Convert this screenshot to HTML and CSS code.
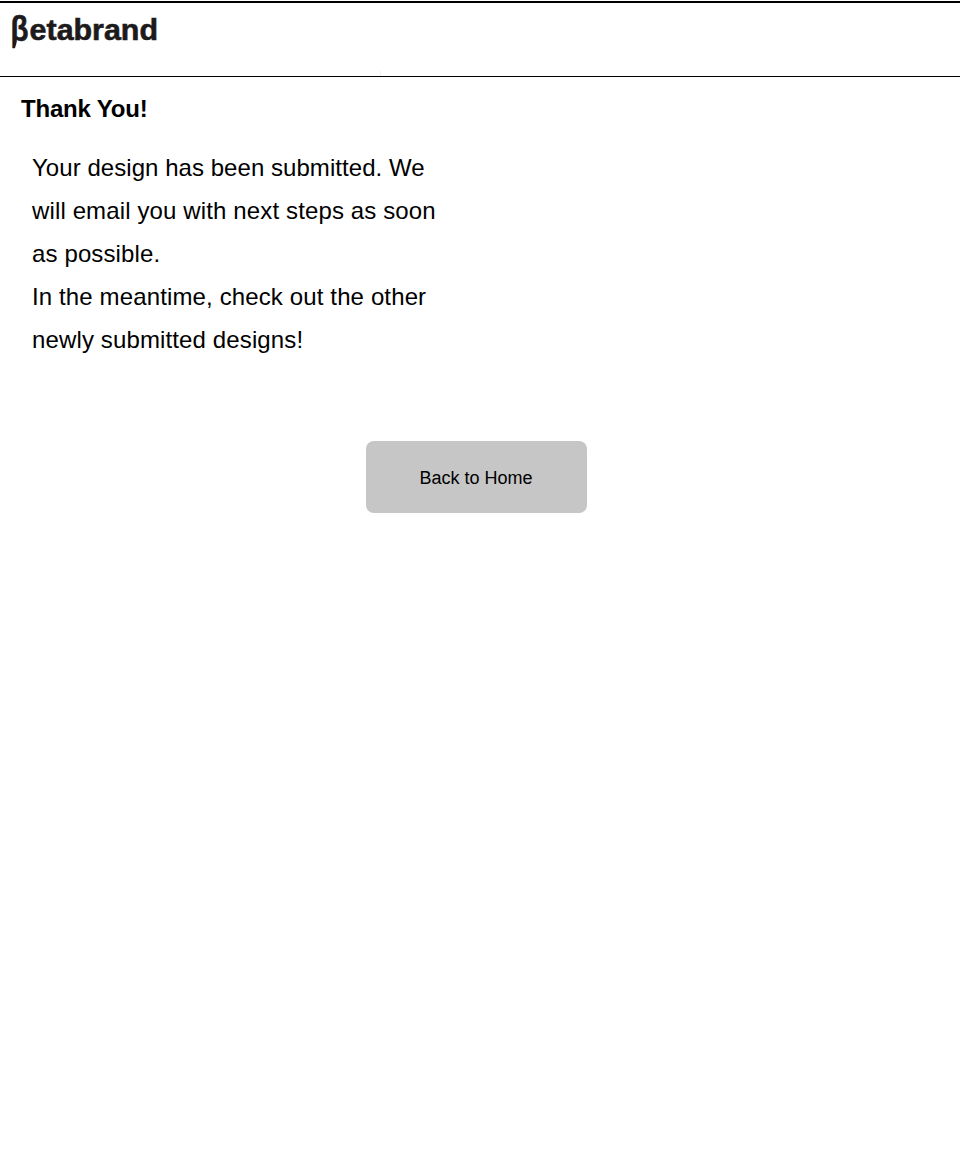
FILE: index.html
```html
<!DOCTYPE html>
<html lang="en">
<head>
<meta charset="utf-8">
<title>Betabrand</title>
<link rel="stylesheet" href="styles.css">
</head>
<body>
<header class="header">
  <svg class="logo" width="160" height="52" viewBox="0 0 160 52" role="img" aria-label="Betabrand">
    <text class="logo-beta" x="10.6" y="38.3" textLength="18" lengthAdjust="spacingAndGlyphs">β</text>
    <path class="logo-cut" d="M17 38.6L13.8 49H19V38.6Z"/>
    <text class="logo-text" x="29.6" y="36.5" textLength="128.4" lengthAdjust="spacingAndGlyphs">etabrand</text>
  </svg>
  <span class="header-mark"></span>
</header>
<main class="content">
  <h1 class="title">Thank You!</h1>
  <div class="message">
    <p class="line"><span class="lead">Your design has been submitted. We</span> will email you with next steps as soon as possible.</p>
    <p class="line">In the meantime, check out the other newly submitted designs!</p>
  </div>
  <button class="home-button" type="button">Back to Home</button>
</main>
</body>
</html>
```
FILE: styles.css
```css
* {
  box-sizing: border-box;
}

body {
  margin: 0;
  padding-top: 1px;
  background: #fff;
  color: #000;
  font-family: "Liberation Sans", Arial, sans-serif;
}

.header {
  display: flex;
  height: 76px;
  border-top: 2px solid #000;
  border-bottom: 1px solid #000;
}

.logo {
  flex: none;
  display: block;
}

.logo-text,
.logo-beta {
  font-weight: bold;
  fill: #1d1a1c;
  stroke: #1d1a1c;
  stroke-width: 0.6px;
}

.logo-text {
  font-size: 30px;
}

.logo-beta {
  font-size: 35px;
}

.logo-cut {
  fill: #fff;
}

.header-mark {
  align-self: flex-end;
  width: 1px;
  height: 5px;
  margin-left: 220px;
  background: #f1f1f1;
}

.content {
  display: flex;
  flex-direction: column;
  padding: 18px 21px 0;
}

.title {
  margin: 0;
  font-size: 24px;
  line-height: 28px;
  letter-spacing: -0.2px;
}

.message {
  width: 420px;
  margin: 23px 0 0 11px;
  font-size: 24px;
  line-height: 43px;
  letter-spacing: 0.13px;
}

.line {
  margin: 0;
}

.lead {
  letter-spacing: 0.05px;
}

.home-button {
  width: 221px;
  height: 72px;
  margin: 80px 0 0 345px;
  padding: 2px 1px 0 0;
  border: 0;
  border-radius: 8px;
  background: #c6c6c6;
  color: #000;
  font-family: inherit;
  font-size: 18px;
}
```
